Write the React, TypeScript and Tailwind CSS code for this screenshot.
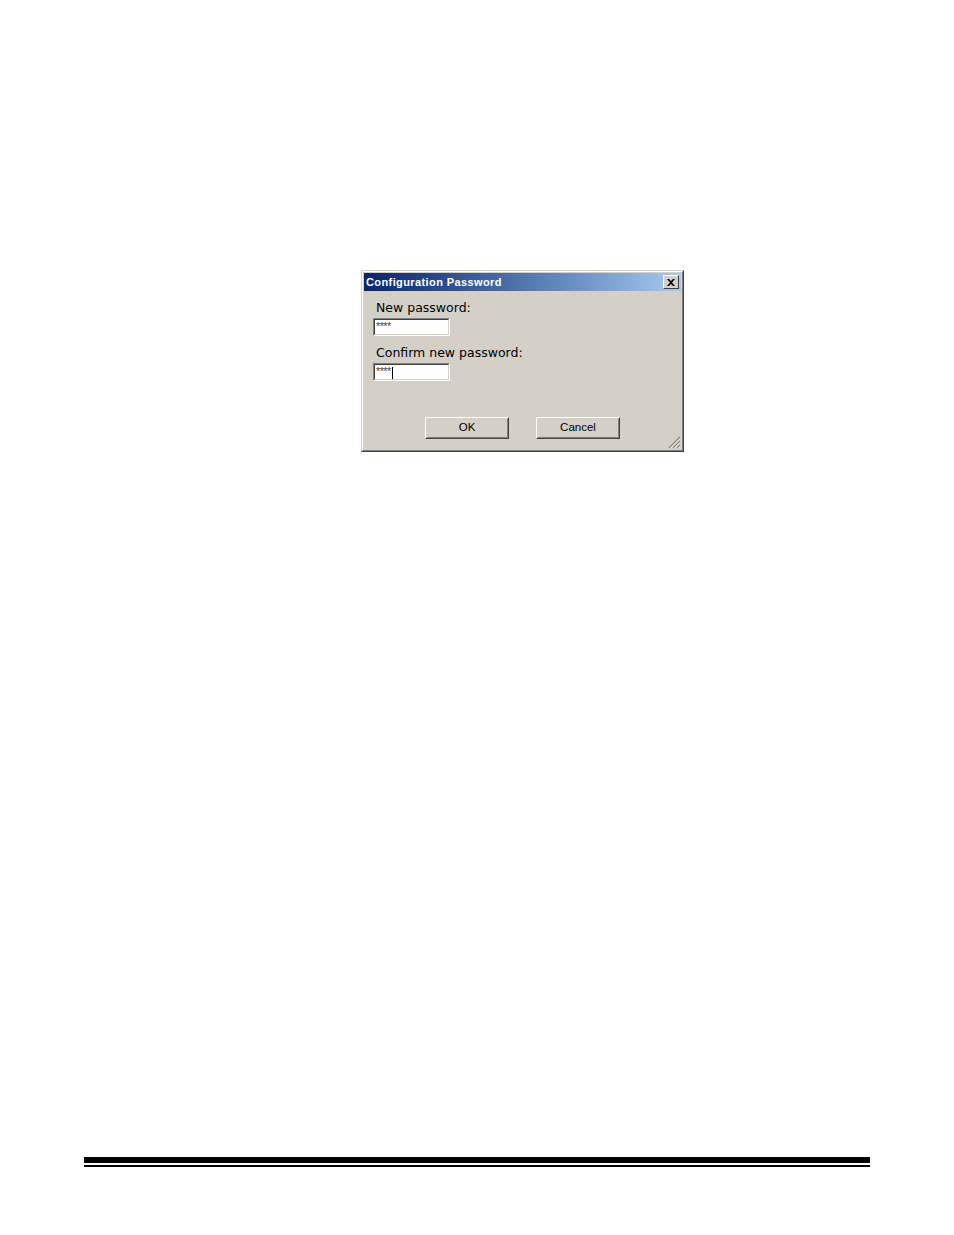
import React from "react";

const ui = { fontFamily: '"DejaVu Sans", Verdana, sans-serif' };
const btnFont = { fontFamily: '"Liberation Sans", Arial, sans-serif' };

function PasswordField({ caret }: { caret?: boolean }) {
  return (
    <div className="w-[77px] h-[18px] border border-t-[#808080] border-l-[#808080] border-b-white border-r-white">
      <div className="relative h-full border border-t-[#404040] border-l-[#404040] border-b-[#d4d0c8] border-r-[#d4d0c8] bg-white">
        <span className="absolute left-[1px] top-0 text-[11px] leading-[12px] text-[#444] tracking-[-0.6px]" style={btnFont}>
          ****
        </span>
        {caret && <span className="absolute left-[17px] top-[2px] w-px h-[12px] bg-black" />}
      </div>
    </div>
  );
}

function Button({ label }: { label: string }) {
  return (
    <button className="w-[84px] h-[22px] border border-t-white border-l-white border-b-[#404040] border-r-[#404040] bg-[#d4d0c8] p-0">
      <div
        className="h-full flex items-center justify-center border border-t-[#d4d0c8] border-l-[#d4d0c8] border-b-[#808080] border-r-[#808080] text-[11.5px] text-black"
        style={btnFont}
      >
        {label}
      </div>
    </button>
  );
}

export default function App() {
  return (
    <div className="w-[954px] h-[1235px] bg-white flex flex-col">
      <div className="ml-[361px] mt-[270px] w-[323px] h-[182px] border border-t-[#d4d0c8] border-l-[#d4d0c8] border-b-[#404040] border-r-[#404040]">
        <div className="h-full border border-t-white border-l-white border-b-[#808080] border-r-[#808080] bg-[#d4d0c8] p-px flex flex-col">
          <div className="h-[18px] flex items-center justify-between pl-[2px] pr-[2px] bg-gradient-to-r from-[#0a246a] to-[#a6caf0]">
            <span className="text-white font-bold text-[11px] leading-none tracking-[0.4px]" style={btnFont}>
              Configuration Password
            </span>
            <div className="w-[16px] h-[14px] border border-t-white border-l-white border-b-[#404040] border-r-[#404040] bg-[#d4d0c8] flex items-center justify-center">
              <svg width="8" height="7" viewBox="0 0 8 7">
                <path d="M0 0 L2 0 L4 2 L6 0 L8 0 L5 3.5 L8 7 L6 7 L4 5 L2 7 L0 7 L3 3.5 Z" fill="black" />
              </svg>
            </div>
          </div>
          <div className="relative flex-1 flex flex-col pl-[9px] pt-[9px]" style={ui}>
            <span className="ml-[3px] text-[12.5px] leading-[15px] text-black">New password:</span>
            <div className="mt-[3px]">
              <PasswordField />
            </div>
            <span className="ml-[3px] mt-[9px] text-[12.5px] leading-[15px] text-black">Confirm new password:</span>
            <div className="mt-[3px]">
              <PasswordField caret />
            </div>
            <div className="mt-[36px] ml-[52px] flex gap-[27px]">
              <Button label="OK" />
              <Button label="Cancel" />
            </div>
            <svg className="absolute right-0 bottom-0" width="13" height="13" viewBox="0 0 13 13">
              <path d="M12 1 L1 12 M12 5 L5 12 M12 9 L9 12" stroke="#808080" strokeWidth="1.2" />
              <path d="M12 2.5 L2.5 12 M12 6.5 L6.5 12 M12 10.5 L10.5 12" stroke="#ffffff" strokeWidth="0.8" />
            </svg>
          </div>
        </div>
      </div>
      <div className="ml-[84px] mt-[705px] w-[786px] h-[6px] bg-black" />
      <div className="ml-[84px] mt-[2px] w-[786px] h-[2px] bg-black" />
    </div>
  );
}
